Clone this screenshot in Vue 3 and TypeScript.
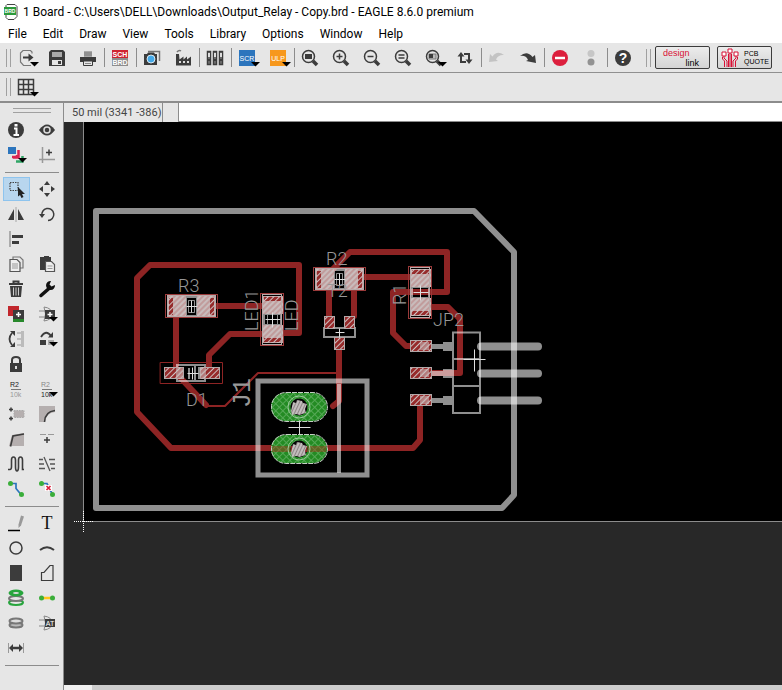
<script setup lang="ts">
interface Tool {
  name: string
  art: string
  menu?: boolean
  active?: boolean
}

interface Box {
  x: number
  y: number
  w: number
  h: number
}

interface Label {
  text: string
  x: number
  y: number
  turned?: boolean
}

const menus: string[] = ['File', 'Edit', 'Draw', 'View', 'Tools', 'Library', 'Options', 'Window', 'Help']

const D = '#3c3c3c'
const lens = `<circle cx="10.5" cy="10.5" r="6" fill="none" stroke="${D}" stroke-width="1.5"/><path d="M15 15l4 4" stroke="${D}" stroke-width="3.5"/>`

const toolbar: Tool[][] = [
  [
    { name: 'Open', menu: true, art: `<path d="M18 7.5V6l-1.5-1.5H9L6.5 7v9l3 3.5H17" fill="none" stroke="#777" stroke-width="1.2"/><path d="M9 11.5h6" stroke="${D}" stroke-width="2"/><path d="M14.5 7.5l5 4-5 4z" fill="${D}"/>` },
    { name: 'Save', art: `<path d="M4 6l2-2h12l2 2v14H4z" fill="${D}"/><path d="M7 6h10v5H7z" fill="#aaa"/><path d="M7 14h10v5H7z" fill="#e6e6e6"/><path d="M13 15h3v3h-3z" fill="${D}"/>` },
    { name: 'Print', art: `<path d="M8 5h8v6H8z" fill="#aaa"/><path d="M8 7h8M8 9h8" stroke="#777"/><path d="M4 11h16v5H4z" fill="${D}"/><path d="M7.5 15h9v4.5h-9z" fill="#e6e6e6" stroke="${D}"/><path d="M9 17.5h6" stroke="#888"/>` },
  ],
  [
    { name: 'Schematic', art: `<path d="M4 4h16v8H4z" fill="#cf2430"/><path d="M4 12h16v8H4z" fill="#8d8d8d"/><text x="12" y="10.5" font-size="7" font-weight="700" text-anchor="middle" fill="#fff">SCH</text><text x="12" y="18.5" font-size="7" font-weight="700" text-anchor="middle" fill="#fff">BRD</text>` },
  ],
  [
    { name: 'Image', art: `<path d="M8 5.5h11.500V15" fill="none" stroke="#777" stroke-width="1.5"/><path d="M4 8h3l1-1.5h6l1 1.5h2v11H4z" fill="${D}"/><circle cx="11" cy="13" r="4" fill="#45a9e8" stroke="#fff" stroke-width=".8"/>` },
    { name: 'CAM processor', art: `<path d="M5 19.5V8h3l.5 5.5 4-3v3l3.5-3v3l4-3v9z" fill="${D}"/><path d="M6 6q2-2.500 4-1" stroke="#777" stroke-width="1.5" fill="none"/><path d="M8 15h2v2H8zm4 0h2v2h-2zm4 0h2v2h-2z" fill="#ddd"/>` },
  ],
  [
    { name: 'Library manager', art: `<path d="M4.500 5.500h3v13h-3zm6 0h3v13h-3zm6 0h3v13h-3z" fill="#777" stroke="${D}" stroke-width="1.5"/><path d="M5 7h2v4H5zm6 0h2v4h-2zm6 0h2v4h-2z" fill="#ddd"/><path d="M5 13h2v2H5zm6 0h2v2h-2zm6 0h2v2h-2z" fill="${D}"/>` },
  ],
  [
    { name: 'Run script', menu: true, art: `<path d="M4 4h16v16H4z" fill="#2c75bd"/><text x="12" y="14.5" font-size="7" text-anchor="middle" fill="#fff">SCR</text>` },
    { name: 'Run ULP', menu: true, art: `<path d="M4 4h16v16H4z" fill="#f7981d"/><text x="12" y="14.5" font-size="7" text-anchor="middle" fill="#fff">ULP</text>` },
  ],
  [
    { name: 'Fit', art: `${lens}<path d="M7 8h7v5H7z" fill="${D}"/>` },
    { name: 'Zoom in', art: `${lens}<path d="M7.5 10.5h6M10.5 7.5v6" stroke="${D}" stroke-width="1.5"/>` },
    { name: 'Zoom out', art: `${lens}<path d="M7.5 10.5h6" stroke="${D}" stroke-width="1.5"/>` },
    { name: 'Redraw', art: `${lens}<path d="M7.5 9h6M7.5 12h6" stroke="${D}" stroke-width="1.5"/>` },
    { name: 'Zoom select', menu: true, art: `${lens}<path d="M7 8h7v5H7z" fill="#bbb" stroke="#777"/><path d="M7 8h4v4H7z" fill="${D}"/>` },
    { name: 'Switch', art: `<path d="M8 9v7h5M16 15V8h-5" stroke="${D}" stroke-width="2" fill="none"/><path d="M4.5 10.5L8 6l3.5 4.5zM12.500 13.5L16 18l3.5-4.5z" fill="${D}"/>` },
  ],
  [
    { name: 'Undo', art: `<path d="M4 16l1-8 2.5 2.500Q12 4 19 9q-6-.5-8 4.500l2 1.500z" fill="#c3c3c3"/>` },
    { name: 'Redo', art: `<path d="M20 17l-1-8-2.5 2Q11 4 4 10q6-1 8 4l-2 1z" fill="${D}"/>` },
  ],
  [
    { name: 'Stop', art: `<circle cx="12" cy="12" r="8" fill="#dc1f3d"/><path d="M7 12h10" stroke="#fff" stroke-width="2.5"/>` },
    { name: 'Status', art: `<circle cx="12" cy="7.5" r="3.5" fill="#c6c6c6"/><circle cx="12" cy="16" r="3.5" fill="#929292"/>` },
  ],
  [
    { name: 'Help', art: `<circle cx="12" cy="12" r="8" fill="${D}"/><text x="12" y="17" font-size="14" font-weight="700" text-anchor="middle" fill="#fff">?</text>` },
  ],
]

const palette: Tool[][] = [
  [
    { name: 'Info', art: `<circle cx="12" cy="12" r="8" fill="${D}"/><path d="M10 10.5h2.500V17M9.500 17h5.500" stroke="#fff" stroke-width="2" fill="none"/><path d="M10.500 6h3v2.500h-3z" fill="#fff"/>` },
    { name: 'Show', art: `<path d="M4 12q8-11 16 0-8 11-16 0z" fill="${D}"/><circle cx="12" cy="12" r="3" fill="${D}" stroke="#ddd" stroke-width="1.5"/>` },
    { name: 'Layers', menu: true, art: `<path d="M4 4h8v7H4z" fill="#2c75bd"/><path d="M8 14h5v-2M14.5 7v7.500H9" stroke="#d82352" stroke-width="2.5" fill="none"/><path d="M12 18.500h6.500V13" stroke="#2fa565" stroke-width="2.5" fill="none"/>` },
    { name: 'Mark', art: `<path d="M7.5 4v16M4 16.5h16" stroke="#999" stroke-width="1.5"/><path d="M11 9.5h6M14 6.5v6" stroke="${D}" stroke-width="1.5"/>` },
  ],
  [
    { name: 'Group', active: true, art: `<path d="M6 5.5h8v8H6z" fill="none" stroke="#444" stroke-width="1.2" stroke-dasharray="1.5 1"/><path d="M14 10v9.500l2-1.500 1.5 3 2-1-1.5-3h3z" fill="#222"/>` },
    { name: 'Move', art: `<path d="M12 4l3 4H9zM12 20l3-4H9zM4 12l4-3v6zM20 12l-4-3v6z" fill="${D}"/>` },
    { name: 'Mirror', art: `<path d="M10 7v11H4zM14 7v11h6z" fill="${D}"/><path d="M12 5v15" stroke="#bbb" stroke-width="1.5"/>` },
    { name: 'Rotate', art: `<path d="M7 14A6 6 0 1 1 13 18.5" fill="none" stroke="${D}" stroke-width="1.5"/><path d="M4 12h6l-3 4z" fill="${D}"/>` },
    { name: 'Align', art: `<path d="M6 4v16" stroke="#999" stroke-width="1.5"/><path d="M8 8h11v3H8zM8 14h7v3H8z" fill="${D}"/>` },
    { name: '', art: '' },
    { name: 'Copy', art: `<path d="M9 7V5h7l3 3v8h-3" fill="none" stroke="#777" stroke-width="1.2"/><path d="M6 7.5h7l3 3v9H6z" fill="#eee" stroke="#555" stroke-width="1.2"/><path d="M8 12h6M8 14h6M8 16h6" stroke="#999"/>` },
    { name: 'Paste', art: `<path d="M5 5h4V4h5v1h2v5h-6v8H5z" fill="${D}"/><path d="M10.500 9.500h6l3 3v7h-9z" fill="#eee" stroke="#555" stroke-width="1.2"/><path d="M12.500 14h5M12.500 16.5h5" stroke="#999"/>` },
    { name: 'Delete', art: `<path d="M5 7h14M9.5 6V4.500h5V6" stroke="${D}" stroke-width="2" fill="none"/><path d="M6 9h12l-1 11H7z" fill="${D}"/><path d="M9.500 10.500v8M12 10.500v8M14.500 10.500v8" stroke="#ccc"/>` },
    { name: 'Change', art: `<path d="M6 18.500l8-7" stroke="#111" stroke-width="3.5" stroke-linecap="round"/><path d="M20 8a4.5 4.5 0 1 1-4-4l-1.5 3.500 2 2z" fill="#111"/>` },
    { name: 'Add part', art: `<path d="M4 4h11v10H4z" fill="#c1272d"/><path d="M9 13h11v7H9z" fill="#27882b"/><path d="M9 8h11v9H9z" fill="${D}"/><path d="M12 12.5h5M14.5 10v5" stroke="#fff" stroke-width="1.5"/>` },
    { name: 'Add gate', menu: true, art: `<path d="M4 9h6M4 15h6M9 5q8 1 8 7t-8 7M9 5q3 7 0 14" stroke="#888" fill="none"/><path d="M10 8h10v9H10z" fill="${D}"/><path d="M12.500 12.5h5M15 10v5" stroke="#fff" stroke-width="1.5"/>` },
    { name: 'Pin swap', art: `<path d="M8 6Q3 12 8 18" fill="none" stroke="${D}" stroke-width="1.8"/><path d="M6 4h5v5zM6 20h5v-5z" fill="${D}"/><path d="M13 6h4M13 12h4M13 18h4" stroke="#999"/><path d="M17 4h3v16h-3z" fill="#bbb"/>` },
    { name: 'Replace', menu: true, art: `<path d="M6 10q5-8 10-1" fill="none" stroke="${D}" stroke-width="1.8"/><path d="M13 10.500h5V5z" fill="${D}"/><path d="M5 13h6v5H5z" fill="${D}"/><path d="M13 13h6v5h-6z" fill="#aaa"/>` },
    { name: 'Lock', art: `<path d="M8 12V8q0-3 4-3t4 3v4" fill="none" stroke="${D}" stroke-width="2"/><path d="M6 11h12v9H6z" fill="${D}"/><path d="M11 14h2v3h-2z" fill="#ddd"/>` },
    { name: '', art: '' },
    { name: 'Name', art: `<text x="6" y="10" font-size="7" fill="#222">R2</text><path d="M7 12.500h10" stroke="#777"/><text x="6" y="20" font-size="7" fill="#999">10k</text>` },
    { name: 'Value', menu: true, art: `<text x="6" y="10" font-size="7" fill="#888">R2</text><path d="M7 12.500h10" stroke="#777"/><text x="6" y="20" font-size="7" fill="#222">10k</text>` },
    { name: 'Smash', art: `<path d="M10 8.500h10v7H10z" fill="#b5afaf" stroke="#aaa" stroke-dasharray="1.5 1"/><path d="M5 7.500h4M7 5.500v4M5 16.500h4M7 14.500v4" stroke="${D}" stroke-width="1.5"/>` },
    { name: 'Miter', art: `<path d="M4 4h16v6Q11 11 10 20H4z" fill="#b5afaf"/><path d="M9.500 20Q10 9.500 20 8.500" fill="none" stroke="${D}" stroke-width="1.6"/>` },
    { name: 'Split', art: `<path d="M8 8l12-2v13H5z" fill="#b5afaf"/><path d="M6.500 19.500L9 9l11-2" fill="none" stroke="${D}" stroke-width="1.6"/>` },
    { name: 'Optimize', art: `<path d="M5 7.500h6M13 7.500h6" stroke="#999"/><path d="M9 13h6M12 10v6" stroke="${D}" stroke-width="1.5"/>` },
    { name: 'Meander', art: `<path d="M4 17.500h2q1.5 0 1.5-3V8q0-3 2-3t2 3v7q0 4 1.5 4t1.5-4V8q0-3 2-3t2 3v9.500h1.500" fill="none" stroke="${D}" stroke-width="1.6"/>` },
    { name: 'Unroute', art: `<path d="M4 7.500h4M4 12h5M4 16.500h6M14 7.500h6M15 12h5M16 16.500h4M9 5l6 14" stroke="#555" stroke-width="1.3"/>` },
    { name: 'Route', art: `<path d="M6 6.500h6v5l5 6" fill="none" stroke="#2c75bd" stroke-width="1.7"/><circle cx="6.500" cy="6.500" r="2.5" fill="#3aae3a"/><circle cx="17.500" cy="17.500" r="2.5" fill="#3aae3a"/>` },
    { name: 'Ripup', art: `<path d="M6 6.500h6l5 10" fill="none" stroke="#2c75bd" stroke-width="1.7"/><path d="M10 8h7v6h-7z" fill="#fff"/><path d="M11.500 9l4 4M15.500 9l-4 4" stroke="#dc1f3d" stroke-width="1.7"/><circle cx="6.500" cy="6.500" r="2.5" fill="#3aae3a"/><circle cx="17.500" cy="17.500" r="2.5" fill="#3aae3a"/>` },
  ],
  [
    { name: 'Line', art: `<path d="M4 19.500h12" stroke="#000" stroke-width="1.5"/><path d="M17 4.500l3 1-3 9-2.500 2.500v-3.500z" fill="#999"/>` },
    { name: 'Text', art: `<text x="12" y="18" font-size="18" text-anchor="middle" fill="#111" font-family="Liberation Serif, serif">T</text>` },
    { name: 'Circle', art: `<circle cx="12" cy="12" r="6" fill="none" stroke="${D}" stroke-width="1.5"/>` },
    { name: 'Arc', art: `<path d="M5 14q7-5.500 14 0" fill="none" stroke="${D}" stroke-width="2"/>` },
    { name: 'Rectangle', art: `<path d="M6 4h12v16H6z" fill="${D}"/>` },
    { name: 'Polygon', art: `<path d="M6.500 19.500v-8h2.500l6-7h3v15z" fill="none" stroke="${D}" stroke-width="1.2"/>` },
    { name: 'Via', art: `<ellipse cx="12" cy="16.500" rx="7" ry="2.5" fill="#e6e6e6" stroke="#27a53d" stroke-width="2"/><ellipse cx="12" cy="12.500" rx="7" ry="2.5" fill="#e6e6e6" stroke="#777" stroke-width="2"/><ellipse cx="12" cy="7" rx="7.500" ry="3.500" fill="#27a53d"/><ellipse cx="12" cy="7" rx="3" ry="1" fill="#ddd"/>` },
    { name: 'Signal', art: `<path d="M6 12h12" stroke="#ffc61a" stroke-width="2.5"/><circle cx="6.500" cy="12" r="2.5" fill="#3aae3a"/><circle cx="17.500" cy="12" r="2.5" fill="#3aae3a"/>` },
    { name: 'Hole', art: `<ellipse cx="12" cy="14" rx="6.5" ry="2.5" fill="#bbb" stroke="#777" stroke-width="2"/><ellipse cx="12" cy="10" rx="6.5" ry="2.5" fill="#ddd" stroke="#777" stroke-width="2"/>` },
    { name: 'Attribute', art: `<path d="M4 9h6M4 15h6M9 5q8 1 8 7t-8 7M9 5q3 7 0 14" stroke="#888" fill="none"/><path d="M10 8h10v8H10z" fill="${D}"/><text x="15" y="14.500" font-size="7" text-anchor="middle" fill="#fff">AT</text>` },
    { name: 'Dimension', art: `<path d="M4.500 7v10M19.500 7v10" stroke="#999"/><path d="M8 12h8" stroke="${D}" stroke-width="2.5"/><path d="M5 12l4-4v8zM19 12l-4-4v8z" fill="${D}"/>` },
  ],
]

const traces: string[] = [
  'M283 333H299V265H150L137 278V412L171 448H413L420 440V404',
  'M176 312V373L206 405',
  'M216 306H262',
  'M262 334H230L209 355V372',
  'M333 269L350 252H447V292H393V333L406 346H412',
  'M364 277H411',
  'M329 288V318',
  'M354 288V316',
  'M339 348V401L333 406',
  'M430 307H448L460 319V373H430',
]

const widePads: Box[] = [
  { x: 168, y: 296, w: 18, h: 21 },
  { x: 197, y: 296, w: 18, h: 21 },
  { x: 316, y: 269, w: 18, h: 21 },
  { x: 345, y: 269, w: 18, h: 21 },
  { x: 262, y: 296, w: 21, h: 18 },
  { x: 262, y: 325, w: 21, h: 18 },
  { x: 410, y: 269, w: 21, h: 18 },
  { x: 410, y: 298, w: 21, h: 18 },
]

const smallPads: Box[] = [
  { x: 164, y: 368, w: 19, h: 11 },
  { x: 200, y: 368, w: 19, h: 11 },
  { x: 324, y: 317, w: 10, h: 12 },
  { x: 344, y: 317, w: 10, h: 12 },
  { x: 334, y: 338, w: 10, h: 12 },
  { x: 410, y: 341, w: 21, h: 11 },
  { x: 410, y: 368, w: 21, h: 11 },
  { x: 410, y: 395, w: 21, h: 11 },
]

const bodies: Box[] = [
  { x: 166, y: 295, w: 51, h: 22 },
  { x: 314, y: 268, w: 51, h: 22 },
  { x: 261, y: 294, w: 22, h: 51 },
  { x: 409, y: 267, w: 22, h: 51 },
]

const crosses: string[] = [
  'M186 306h11M191 300v12',
  'M334 279h11M339 273v12',
  'M265 319h15M272 312v15',
  'M413 292h15M420 285v15',
  'M187 373h11M192 367v12',
  'M335 332h9M339 328v9',
  'M288 427h22M299 420v14',
  'M463 359h22M474 349v22',
]

const labels: Label[] = [
  { text: 'R3', x: 178, y: 292 },
  { text: 'R2', x: 326, y: 265 },
  { text: 'T2', x: 327, y: 297 },
  { text: 'D1', x: 186, y: 406 },
  { text: 'JP2', x: 433, y: 326 },
  { text: 'LED1', x: 258, y: 331, turned: true },
  { text: 'LED', x: 298, y: 331, turned: true },
  { text: 'R1', x: 406, y: 305, turned: true },
]

const pinRows: number[] = [346, 373, 400]
const drillRows: number[] = [407, 449]
</script>

<template>
  <div class="app">
    <header class="title">
      <svg class="logo" width="16" height="18" viewBox="0 0 16 18" aria-hidden="true">
        <path d="M4 1.5h8l2 2v10l-3 3H5l-2-2V2.500z" fill="#fff" stroke="#444" />
        <path d="M1 4h12v8H1z" fill="#2b9a3b" />
        <text x="7" y="10" font-size="5" font-weight="700" text-anchor="middle" fill="#fff">BRD</text>
      </svg>
      <h1>1 Board - C:\Users\DELL\Downloads\Output_Relay - Copy.brd - EAGLE 8.6.0 premium</h1>
    </header>

    <nav class="menus">
      <button v-for="m in menus" :key="m" type="button">{{ m }}</button>
    </nav>

    <div class="bar" role="toolbar" aria-label="Actions">
      <span class="grip"></span>
      <div v-for="(group, g) in toolbar" :key="g" class="group">
        <button v-for="t in group" :key="t.name" type="button" class="tool" :aria-label="t.name">
          <svg width="24" height="24" viewBox="0 0 24 24">
            <g v-html="t.art"></g>
            <path v-if="t.menu" d="M16 16h9l-4.5 4.5z" fill="#000" />
          </svg>
        </button>
      </div>
      <span class="grip second"></span>
      <button type="button" class="promo design"><span>design</span><b>link</b></button>
      <button type="button" class="promo quote">
        <svg width="18" height="19" viewBox="0 0 18 19" aria-hidden="true">
          <path d="M3 7v3l3 3v6M9 4v15M15 7v3l-3 3v6M1.5 9v2l2 2v6M16.5 9v2l-2 2v6M7.5 6v13M10.500 6v13" fill="none" stroke="#d80f35" />
          <path d="M1 4h4v4H1zM7 1h4v4H7zM13 4h4v4h-4z" fill="#fff" stroke="#d80f35" />
        </svg>
        <span class="lines"><span>PCB</span><span>QUOTE</span></span>
      </button>
    </div>

    <div class="bar params" role="toolbar" aria-label="Parameters">
      <span class="grip"></span>
      <button type="button" class="tool" aria-label="Grid">
        <svg width="24" height="24" viewBox="0 0 24 24">
          <path d="M4.500 4.500h15v15h-15zM4.500 9.500h15M4.500 14.500h15M9.500 4.500v15M14.500 4.500v15" fill="none" stroke="#3c3c3c" stroke-width="1.5" />
          <path d="M16 17h9l-4.500 4.500z" fill="#000" />
        </svg>
      </button>
    </div>

    <div class="work">
      <aside class="palette">
        <span class="grip wide"></span>
        <div v-for="(group, g) in palette" :key="g" class="cells">
          <template v-for="(t, i) in group" :key="i">
            <button v-if="t.name" type="button" class="cell" :class="{ active: t.active }" :aria-label="t.name">
              <svg width="24" height="24" viewBox="0 0 24 24">
                <g v-html="t.art"></g>
                <path v-if="t.menu" d="M14 15h9l-4.5 4.5z" fill="#000" />
              </svg>
            </button>
            <span v-else></span>
          </template>
        </div>
      </aside>

      <main class="editor">
        <div class="command">
          <output>50 mil (3341 -386)</output>
          <input type="text" aria-label="Command line" />
        </div>

        <svg class="canvas" role="img" aria-label="Board layout">
          <defs>
            <pattern id="redHatch" width="4" height="4" patternUnits="userSpaceOnUse" patternTransform="rotate(45)">
              <path d="M0 0h4v4H0z" fill="#cdc3c3" />
              <path d="M0 0h3v4H0z" fill="#962b2b" />
            </pattern>
            <pattern id="paleHatch" width="4" height="4" patternUnits="userSpaceOnUse" patternTransform="rotate(45)">
              <path d="M0 0h4v4H0z" fill="#c9bcbc" />
              <path d="M0 0h2v4H0z" fill="#c19c9c" />
            </pattern>
            <pattern id="greenHatch" width="5" height="5" patternUnits="userSpaceOnUse" patternTransform="rotate(45)">
              <path d="M0 0h5v5H0z" fill="#238b23" />
              <path d="M0 .5h5M.5 0v5" stroke="#55a855" />
            </pattern>
            <pattern id="drillHatch" width="3" height="3" patternUnits="userSpaceOnUse" patternTransform="rotate(25)">
              <path d="M0 0h3v3H0z" fill="#c2bcbc" />
              <path d="M0 0h1v3H0z" fill="#8e8585" />
            </pattern>
          </defs>

          <g transform="translate(-64 -122)">
            <path d="M84 122H4000V521H84z" fill="#000" />
            <path d="M83.500 122V521" stroke="#8c8c8c" />
            <path d="M83 521.500H4000" stroke="#8c8c8c" />

            <g class="copper">
              <path v-for="t in traces" :key="t" :d="t" />
              <path class="thin" d="M206 406H225L258 373H339" />
              <path class="hair" d="M160.500 362.500h62v21h-62z" />
            </g>

            <g v-for="y in drillRows" :key="y">
              <rect x="271" :y="y - 14" width="56" height="28" rx="14" fill="url(#greenHatch)" />
              <path v-if="y > 440" d="M272 449H326" stroke="#a23a20" stroke-width="6" opacity=".45" />
              <rect x="271.500" :y="y - 14.5" width="56" height="29" rx="14.5" fill="none" stroke="#c4d0c4" stroke-dasharray="5 1" />
              <circle cx="299" :cy="y" r="11" fill="none" stroke="#9ccb9c" />
              <circle cx="299" :cy="y" r="8.5" fill="#050505" />
              <path v-if="y > 440" d="M291 449H307" stroke="#8e2424" stroke-width="6" />
              <path :d="`M293 ${y - 5}l3 1 1-3 5 1 1 2 4 1-2 5 1 4-4 1-2 1-4-1-4 1-1-4z`" fill="url(#drillHatch)" />
            </g>

            <g class="silk">
              <path class="edge" d="M96 211H474L514 252V495L502 508H96z" />
              <path class="frame" d="M258 381H367V475H258z" />
              <path class="rib" d="M339 384V473" />
              <path class="line2" d="M453 332.500H480V413H453zM453 359H480M453 386H480" />
              <path class="line2" d="M324 328H355V337H324z" />
              <path class="line2" d="M177 365H205V381H177zM186 297h11v19h-11zM334 270h11v19h-11zM264 314h17v11h-17zM412 287h17v11h-17z" />
              <path class="line1" d="M188.500 300.500h6v12h-6zM336.500 273.500h6v12h-6zM267.500 315v9M277.500 315v9" />
              <path class="line2" d="M189 368v11M195 366v14M199 367v12" />
              <template v-for="y in pinRows" :key="y">
                <path class="lead" :d="`M431 ${y}.5H443`" />
                <path class="pin" :d="`M443 ${y}.5H452`" />
                <path class="tail" :d="`M481 ${y}.5H538`" />
              </template>
            </g>

            <rect v-for="(p, i) in widePads" :key="`s${i}`" :x="p.x" :y="p.y" :width="p.w" :height="p.h" fill="url(#paleHatch)" />
            <path d="M169 298h4v17h-4zM210 298h4v17h-4zM317 271h4v17h-4zM358 271h4v17h-4zM264 297h17v4h-17zM264 338h17v4h-17zM412 270h17v4h-17zM412 311h17v4h-17z" fill="url(#redHatch)" />
            <rect v-for="(p, i) in smallPads" :key="`m${i}`" :x="p.x + 0.5" :y="p.y - 0.5" :width="p.w" :height="p.h" fill="url(#redHatch)" stroke="#b3a9a9" />
            <path d="M176 367h7v12h-7zM200 367h6v12h-6zM420 342h9v8h-9zM420 369h9v8h-9zM420 396h9v8h-9z" fill="url(#paleHatch)" opacity=".7" />
            <g v-for="(b, i) in bodies" :key="`b${i}`">
              <rect :x="b.x - 0.5" :y="b.y - 0.5" :width="b.w + 1" :height="b.h + 1" fill="none" stroke="#9a3a3a" />
              <rect :x="b.x + 1.5" :y="b.y + 0.5" :width="b.w - 3" :height="b.h - 1" fill="none" stroke="#b9abab" />
            </g>
            <path v-for="c in crosses" :key="c" :d="c" transform="translate(.5 .5)" fill="none" stroke="#dedede" />

            <g class="labels">
              <text v-for="l in labels" :key="l.text" :transform="`translate(${l.x} ${l.y})${l.turned ? ' rotate(-90)' : ''}`">{{ l.text }}</text>
              <text class="mono" transform="translate(250 408) rotate(-90)">J1</text>
            </g>

            <path d="M74 521.500H94M83.500 511V532" stroke="#fff" stroke-dasharray="1 1" />
          </g>
        </svg>

        <div class="scroll"><span></span></div>
      </main>
    </div>
  </div>
</template>

<style>
body {
  margin: 0;
}
</style>

<style scoped>
.app {
  display: flex;
  flex-direction: column;
  height: 100vh;
  overflow: hidden;
  background: #e6e6e6;
  color: #000;
  font-family: Roboto, 'Open Sans', sans-serif;
  font-size: 12px;
}

button {
  margin: 0;
  padding: 0;
  border: 0;
  background: none;
  font: inherit;
  color: inherit;
}

svg {
  display: block;
  overflow: visible;
  font-family: 'Liberation Sans', sans-serif;
}

.title {
  display: flex;
  align-items: center;
  gap: 4px;
  height: 24px;
  padding-left: 3px;
  background: #fff;
}

h1 {
  margin: 0;
  font-size: 12px;
  font-weight: 400;
  white-space: nowrap;
}

.menus {
  display: flex;
  gap: 16px;
  height: 19px;
  padding-left: 8px;
  background: #fff;
}

.bar {
  display: flex;
  align-items: center;
  height: 29px;
  padding-left: 6px;
  border-bottom: 1px solid #909090;
}

.params {
  height: 28px;
  border-bottom: 2px solid #8c8c8c;
}

.grip {
  flex: none;
  width: 3px;
  height: 18px;
  border-left: 1px solid #a0a0a0;
  border-right: 1px solid #a0a0a0;
}

.group {
  display: flex;
  align-items: center;
}

.group + .group::before {
  content: '';
  width: 1px;
  height: 19px;
  background: #8c8c8c;
}

.tool {
  display: grid;
  place-items: center start;
  width: 31px;
  height: 28px;
  padding-left: 3px;
}

.second {
  margin: 0 4px 0 7px;
}

.promo {
  flex: none;
  width: 55px;
  height: 23px;
  box-sizing: border-box;
  border: 1px solid #3c3c3c;
  border-radius: 2px;
  background: linear-gradient(#ececec, #d4d4d4);
  font-family: 'Liberation Sans', sans-serif;
}

.design {
  display: grid;
  align-content: center;
  margin-right: 7px;
  padding: 0 10px 0 7px;
  font-size: 9px;
  line-height: 10px;
}

.design span {
  color: #d80f35;
  text-align: left;
}

.design b {
  font-weight: 400;
  text-align: right;
}

.quote {
  display: flex;
  align-items: center;
  gap: 5px;
  padding-left: 3px;
  font-size: 7px;
  line-height: 8px;
  text-align: left;
}

.lines {
  display: grid;
}

.work {
  display: flex;
  flex: 1;
  min-height: 0;
}

.palette {
  flex: none;
  width: 63px;
  border-right: 1px solid #8c8c8c;
}

.wide {
  display: block;
  box-sizing: border-box;
  width: 38px;
  height: 5px;
  margin: 5px auto 5px 13px;
  border: solid #a0a0a0;
  border-width: 1px 0;
}

.cells {
  display: grid;
  grid-template-columns: 31px 31px;
  grid-auto-rows: 25px;
  position: relative;
  padding: 0 0 9px 1px;
}

.cells::after {
  content: '';
  position: absolute;
  left: 5px;
  right: 4px;
  bottom: 4px;
  height: 1px;
  background: #8c8c8c;
}

.cell {
  display: grid;
  place-items: start;
  padding-left: 3px;
}

.active {
  margin: 0 2px 1px;
  padding-left: 1px;
  background: #b8d6ee;
  box-shadow: inset 0 0 0 1px #8ec4ee;
}

.editor {
  display: flex;
  flex: 1;
  flex-direction: column;
  min-width: 0;
}

.command {
  display: flex;
  gap: 15px;
  height: 19px;
}

.command output {
  width: 99px;
  box-sizing: border-box;
  padding-left: 8px;
  border-right: 1px solid #8c8c8c;
  color: #444;
  font-size: 11px;
  line-height: 19px;
  white-space: nowrap;
}

.command input {
  flex: 1;
  min-width: 0;
  padding: 0 4px;
  border: 0;
  border-left: 1px solid #8c8c8c;
  border-bottom: 1px solid #8c8c8c;
  background: #fff;
  font: inherit;
  outline: 0;
}

.canvas {
  flex: 1;
  width: 100%;
  min-height: 0;
  overflow: hidden;
  background: #282828;
}

.copper path {
  fill: none;
  stroke: #8e2424;
  stroke-width: 6px;
  stroke-linejoin: round;
  stroke-linecap: round;
}

.copper .thin {
  stroke-width: 2px;
}

.copper .hair {
  stroke-width: 1px;
}

.silk path {
  fill: none;
  stroke: #fff;
  stroke-opacity: 0.56;
}

.silk .edge {
  stroke-width: 6px;
  stroke-linejoin: round;
}

.silk .frame {
  stroke-width: 5px;
}

.silk .rib {
  stroke-width: 4px;
}

.silk .line1 {
  stroke-width: 1px;
}

.silk .line2 {
  stroke-width: 2px;
}

.silk .lead {
  stroke-width: 5px;
}

.silk .pin {
  stroke-width: 9px;
}

.silk .tail {
  stroke-width: 8px;
  stroke-linecap: round;
}

.labels text {
  fill: #989898;
  font-family: Roboto, 'Liberation Sans', sans-serif;
  font-size: 18px;
  font-weight: 300;
}

.labels .mono {
  font-family: 'Liberation Mono', monospace;
  font-size: 25px;
}

.scroll {
  height: 5px;
  padding-left: 28px;
  background: #f0f0f0;
}

.scroll span {
  display: block;
  height: 100%;
  background: #cdcdcd;
}
</style>
